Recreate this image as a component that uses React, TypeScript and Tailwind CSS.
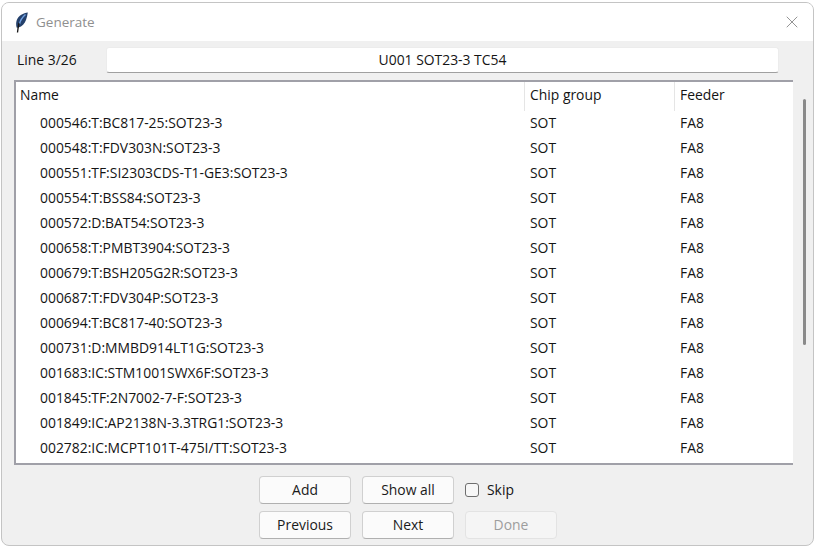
import { X } from "lucide-react";

const rows = [
  "000546:T:BC817-25:SOT23-3",
  "000548:T:FDV303N:SOT23-3",
  "000551:TF:SI2303CDS-T1-GE3:SOT23-3",
  "000554:T:BSS84:SOT23-3",
  "000572:D:BAT54:SOT23-3",
  "000658:T:PMBT3904:SOT23-3",
  "000679:T:BSH205G2R:SOT23-3",
  "000687:T:FDV304P:SOT23-3",
  "000694:T:BC817-40:SOT23-3",
  "000731:D:MMBD914LT1G:SOT23-3",
  "001683:IC:STM1001SWX6F:SOT23-3",
  "001845:TF:2N7002-7-F:SOT23-3",
  "001849:IC:AP2138N-3.3TRG1:SOT23-3",
  "002782:IC:MCPT101T-475I/TT:SOT23-3",
];

function Feather() {
  return (
    <svg width="14" height="21" viewBox="0 0 14 21">
      <path d="M12.800 .5C8.500 1 3.500 3.500 1.800 8c-.9 2.500-.8 5-.2 7.500 .5 .3 1.200 .3 1.900 .1C7 14.500 9.800 11.500 11 8c.9-2.500 1.500-5 1.800-7.500z" fill="#24406b" />
      <path d="M10.500 2.500C7.500 5 5.300 8.500 4.500 12" stroke="#6f9fe0" strokeWidth="1.500" fill="none" />
      <path d="M4 11C3.300 14.500 2.800 17.500 2.500 20.500" stroke="#161616" strokeWidth="1.300" fill="none" />
    </svg>
  );
}

function Button({ label, disabled }: { label: string; disabled?: boolean }) {
  return (
    <button
      className={
        disabled
          ? "w-[92px] h-[28px] rounded-[4px] border border-[#e3e3e3] bg-[#f5f5f5] text-[#9d9d9d]"
          : "w-[92px] h-[28px] rounded-[4px] border border-[#d0d0d0] border-b-[#b0b0b0] bg-[#fbfbfb] text-[#1a1a1a]"
      }
    >
      {label}
    </button>
  );
}

export default function App() {
  return (
    <div className="w-[815px] h-[547px] bg-white overflow-hidden font-['Open_Sans','Noto_Sans',sans-serif] text-[13.9px] text-[#141414] pt-[2px] px-px">
      <div className="w-[813px] h-[544px] flex flex-col rounded-[8px] border border-[#c4c4c4] overflow-hidden bg-[#f0f0f0]">
        <div className="h-[38px] shrink-0 bg-white flex items-center pl-[13px] pr-[11px]">
          <Feather />
          <span className="ml-[7px] text-[13.5px] text-[#8f8f8f]">Generate</span>
          <X className="ml-auto w-[20px] h-[20px] text-[#8a8a8a]" strokeWidth={1.1} />
        </div>

        <div className="flex items-center h-[26px] mt-[6px] pl-[15px]">
          <span className="w-[89px]">Line 3/26</span>
          <div className="w-[673px] h-[26px] flex items-center justify-center bg-white rounded-[3px] border border-[#ececec] border-b-[#a0a0a0]">
            U001 SOT23-3 TC54
          </div>
        </div>

        <div className="flex mt-[7px] pl-[12px]">
          <div className="w-[779px] h-[385px] bg-white border-l-2 border-t-2 border-b-2 border-[#a0a0a8] overflow-hidden">
            <div className="flex h-[29px]">
              <div className="w-[509px] pl-[4px] pt-[3px] border-r border-[#e5e5e5]">Name</div>
              <div className="w-[150px] pl-[5px] pt-[3px] border-r border-[#e5e5e5]">Chip group</div>
              <div className="pl-[5px] pt-[3px]">Feeder</div>
            </div>
            {rows.map((name) => (
              <div key={name} className="flex h-[25px] pb-[1px] items-center">
                <div className="w-[509px] pl-[24px]">{name}</div>
                <div className="w-[150px] pl-[5px]">SOT</div>
                <div className="pl-[5px]">FA8</div>
              </div>
            ))}
          </div>
          <div className="ml-[10px] mt-[19px] w-[3px] h-[246px] bg-[#8a8a8a] rounded-full" />
        </div>

        <div className="flex flex-col items-start gap-[7px] mt-[11px] ml-[257px]">
          <div className="flex items-center gap-[11px]">
            <Button label="Add" />
            <Button label="Show all" />
            <label className="flex items-center gap-[8px]">
              <span className="w-[14px] h-[14px] rounded-[3px] border border-[#6e6e6e] bg-[#f7f7f7]" />
              Skip
            </label>
          </div>
          <div className="flex items-center gap-[11px]">
            <Button label="Previous" />
            <Button label="Next" />
            <Button label="Done" disabled />
          </div>
        </div>
      </div>
    </div>
  );
}
